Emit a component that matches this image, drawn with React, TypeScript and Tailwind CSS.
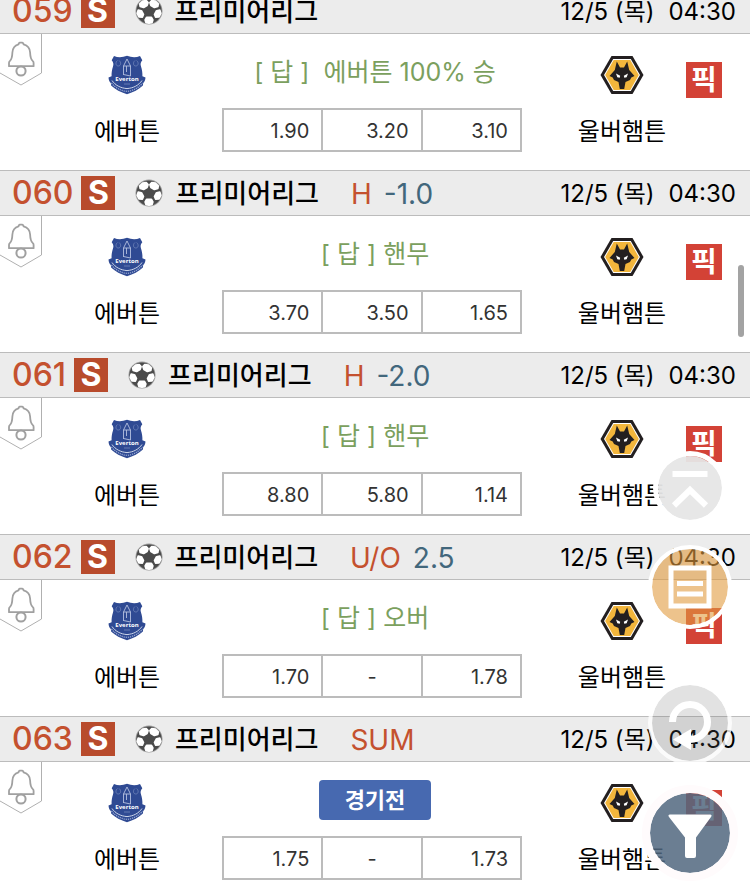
import React from 'react';

type Match = {
  no: string;
  tag?: string;
  line?: string;
  answer?: string;
  odds: string[];
};

const MATCHES: Match[] = [
  { no: '059', answer: '[ 답 ]  에버튼 100% 승', odds: ['1.90', '3.20', '3.10'] },
  { no: '060', tag: 'H', line: '-1.0', answer: '[ 답 ] 핸무', odds: ['3.70', '3.50', '1.65'] },
  { no: '061', tag: 'H', line: '-2.0', answer: '[ 답 ] 핸무', odds: ['8.80', '5.80', '1.14'] },
  { no: '062', tag: 'U/O', line: '2.5', answer: '[ 답 ] 오버', odds: ['1.70', '-', '1.78'] },
  { no: '063', tag: 'SUM', odds: ['1.75', '-', '1.73'] },
];

const SoccerBall = () => (
  <svg viewBox="0 0 28 28" className="size-7 shrink-0" aria-hidden="true">
    <circle cx="14" cy="14" r="13.5" fill="#9a9a9a" />
    <circle cx="14" cy="14" r="12.6" fill="#4b4b4b" />
    <g fill="#fff" stroke="#fff" strokeWidth="1.8" strokeLinejoin="round">
      <path d="M7.600 4.200L11.200 3.600L13 5.600L12 8.400L8.600 10.400L5.200 9.400L4.800 7Z" />
      <path d="M20.400 4.200L16.800 3.600L15 5.600L16 8.400L19.400 10.400L22.800 9.400L23.200 7Z" />
      <path d="M3.200 13.200L6.400 13.800L8.400 17.400L7.400 20L4 19.800L2.200 16.400Z" />
      <path d="M24.800 13.200L21.600 13.800L19.600 17.400L20.600 20L24 19.800L25.800 16.400Z" />
      <path d="M11.600 20.400H16.400L17.800 23L17 25.600L14 26.200L11 25.600L10.200 23Z" />
    </g>
  </svg>
);

const BellTag = () => (
  <svg viewBox="0 0 42 52" className="h-[52px] w-[42px]" fill="none" aria-hidden="true">
    <path d="M41.5 0V39L21 51L0 39" stroke="#b0b0b0" />
    <g stroke="#a0a0a0" strokeWidth="1.8" strokeLinejoin="round">
      <path d="M21 8.300c-1.500 0-2.400.9-2.500 2.100C14.500 11.600 12.600 14.600 12.400 18.500c-.2 5-.6 7-2.600 8.600-.6.5-.8 1-.8 1.800v3.300h24.600v-3.300c0-.8-.2-1.300-.8-1.800-2-1.600-2.500-3.600-2.700-8.600-.2-3.900-2-6.900-6.500-8.100-.2-1.200-1.100-2.100-2.600-2.100Z" />
      <circle cx="21" cy="37" r="4.600" strokeWidth="2" />
    </g>
  </svg>
);

const EvertonCrest = () => (
  <svg viewBox="0 0 38 40" className="h-10 w-[38px]" role="img" aria-label="에버튼">
    <path d="M6 1C10 2.800 14.500 2.600 19 .8c4.500 1.800 9 2 13 .2l2.300 4.200c-1.700 1.800-2.100 3.800-1.300 6.200 1 3 1.600 6.100 1.400 9.800l3.100 1.300c-.2 2.500-.9 4.300-2.300 5.500l-.3 2.500C30.500 34.600 25.500 37.200 19 39.200 12.500 37.200 7.500 34.600 3.100 30.500l-.3-2.500C1.400 26.800.7 25 .5 22.500l3.100-1.300C3.400 17.500 4 14.400 5 11.400c.8-2.400.4-4.400-1.300-6.200Z" fill="#2f4a93" />
    <g fill="none" stroke="#b4c0df" strokeWidth="0.9">
      <path d="M15.500 20V11h7V21M15.500 11L19 4l3.500 7M15.500 19.500l7 1.500M18.500 11v6" />
      <path d="M9.500 5.500c-2.500 2-1.800 5.500.8 5.500s3.300-3.500.8-5.500M27 5.500c-2.500 2-1.800 5.500.8 5.500s3.300-3.500.8-5.500" opacity="0.4" />
    </g>
    <text x="19" y="26" textAnchor="middle" className="font-['Open_Sans',sans-serif] text-[6px] font-bold" fill="#fff">Everton</text>
    <path d="M16 29h6" stroke="#8c9dcb" strokeWidth="1" opacity="0.6" />
    <path d="M4 25.500C7.500 30.500 12.500 33 19 33.600c6.500-.6 11.500-3.100 15-8.100" fill="none" stroke="#dfe5f3" strokeWidth="0.9" />
    <path d="M3.500 28C8 33.500 13 35.600 19 36.400c6-.8 11-2.900 15.500-8.400" fill="none" stroke="#94a5d0" strokeWidth="1.300" strokeDasharray="1.200 0.900" />
  </svg>
);

const WolvesCrest = () => (
  <svg viewBox="0 0 44 40" className="h-10 w-11" role="img" aria-label="울버햄튼">
    <path d="M11.500 1h21L43.500 20 32.500 39h-21L.5 20Z" fill="#231f20" />
    <path d="M13.200 4h17.600L40 20l-9.200 16H13.200L4 20Z" fill="#fff" />
    <path d="M13.700 5h16.600L38.800 20l-8.500 15H13.700L5.200 20Z" fill="#f3b63c" />
    <path d="M16.800 6.500l3.200 6h4l3.200-6 2 8.500L34.500 21l-3.200 1.500-1.300 2.500-4.500 2-1.300 7h-4.400l-1.300-7L14 25l-1.300-2.500L9.500 21l5.300-6Z" fill="#231f20" />
    <path d="M16 18.500l4.200 2.200-.5 2-2.400-.4ZM28 18.500l-4.200 2.200.5 2 2.400-.4Z" fill="#fff" />
  </svg>
);

const MatchHeader: React.FC<{ match: Match }> = ({ match }) => (
  <header className="flex h-[46px] items-center border-y border-[#bcbcbc] bg-[#ececec] pr-3.5 pl-3 leading-none whitespace-nowrap">
    <span className="text-[32px] font-medium text-[#c4512f]">{match.no}</span>
    <span className="ml-2 flex size-[34px] items-center justify-center bg-[#b84b2c] text-[32px] font-bold text-white">S</span>
    <span className="ml-5">
      <SoccerBall />
    </span>
    <h2 className="ml-3 pt-0.5 text-[26px] font-medium text-black">프리미어리그</h2>
    {match.tag && <span className="ml-8 pt-0.5 text-[28px] text-[#c4512f]">{match.tag}</span>}
    {match.line && <span className="ml-3 pt-0.5 text-[28px] text-[#42677c]">{match.line}</span>}
    <time className="ml-auto flex gap-3.5 pt-0.5 text-2xl text-black">
      <span>12/5 (목)</span>
      <span>04:30</span>
    </time>
  </header>
);

const MatchRow: React.FC<{ match: Match }> = ({ match }) => (
  <article>
    <MatchHeader match={match} />
    <div className="grid h-[136px] grid-cols-[42fr_180fr_300fr_164fr_64fr] items-start text-2xl text-black">
      <button type="button" aria-label="알림">
        <BellTag />
      </button>

      <div className="flex flex-col items-center gap-[19px] pt-[21px] pr-2.5">
        <EvertonCrest />
        <span className="leading-9">에버튼</span>
      </div>

      <div>
        <div className="flex h-[74px] items-center justify-center pt-0.5 pl-1.5">
          {match.answer ? (
            <p className="whitespace-pre text-[25px] leading-9 text-[#7ba05e]">{match.answer}</p>
          ) : (
            <button type="button" className="h-10 w-28 rounded bg-[#4769b0] text-[22px] leading-none font-bold text-white">
              경기전
            </button>
          )}
        </div>
        <table className="h-11 w-full table-fixed border-collapse text-xl leading-none text-[#333]">
          <tbody>
            <tr>
              {match.odds.map((odd, index) => (
                <td key={index} className={`border-2 border-[#bcbcbc] pt-0.5 ${odd === '-' ? 'text-center' : 'pr-3 text-right'}`}>
                  {odd}
                </td>
              ))}
            </tr>
          </tbody>
        </table>
      </div>

      <div className="flex flex-col items-center gap-[19px] pt-[21px] pl-9">
        <WolvesCrest />
        <span className="leading-9 whitespace-nowrap">울버햄튼</span>
      </div>

      <button type="button" className="mt-7 size-9 bg-[#d34236] text-[28px] leading-none font-bold text-white">
        픽
      </button>
    </div>
  </article>
);

const FloatingMenu = () => (
  <nav className="fixed right-3 bottom-2 flex flex-col items-center gap-5">
    <button type="button" aria-label="맨 위로" className="size-[74px] rounded-full border-5 border-white bg-[#e6e6e6]/95 bg-clip-padding">
      <svg viewBox="0 0 64 64" className="size-16" fill="none" stroke="#fff" strokeWidth="6">
        <path d="M14.500 18H49.500M16 49.500L32 34L48 49.500" />
      </svg>
    </button>

    <button type="button" aria-label="목록" className="mb-8 size-[84px] rounded-full border-4 border-white bg-[#e19b3f]/60 bg-clip-padding">
      <svg viewBox="0 0 76 76" className="size-[76px]" fill="none" stroke="#fff" strokeWidth="5">
        <path d="M19 19H57V57H19Z" />
        <path d="M25 34.500H51M25 45H51" />
      </svg>
    </button>

    <button type="button" aria-label="새로고침" className="size-[84px] rounded-full border-4 border-white/80 bg-[#6e6e6e]/20 bg-clip-padding">
      <svg viewBox="0 0 76 76" className="size-[76px]">
        <path d="M20.500 37A17.500 17.500 0 1 1 38 54.500" fill="none" stroke="#fff" strokeWidth="7" />
        <path d="M21 54.500L39 44V65Z" fill="#fff" />
      </svg>
    </button>

    <button type="button" aria-label="필터" className="size-24 rounded-full border-8 border-[#fffbfc] bg-[#51677f]/85 bg-clip-padding">
      <svg viewBox="0 0 80 80" className="size-20">
        <path d="M20 21.500H60Q62.500 21.500 61 24L46 44.500V63Q46 65 44 65H37Q35 65 35 63V44.500L19 24Q17.500 21.500 20 21.500Z" fill="#fff" />
      </svg>
    </button>
  </nav>
);

export default function App() {
  return (
    <div className="relative h-screen overflow-hidden bg-white font-[Inter,'Noto_Sans_CJK_KR',sans-serif]">
      <main className="-mt-3">
        {MATCHES.map((match) => (
          <MatchRow key={match.no} match={match} />
        ))}
      </main>
      <FloatingMenu />
      <div className="fixed top-[265px] right-1.5 h-[72px] w-1.5 rounded-full bg-[#a3a3a3]" />
    </div>
  );
}
